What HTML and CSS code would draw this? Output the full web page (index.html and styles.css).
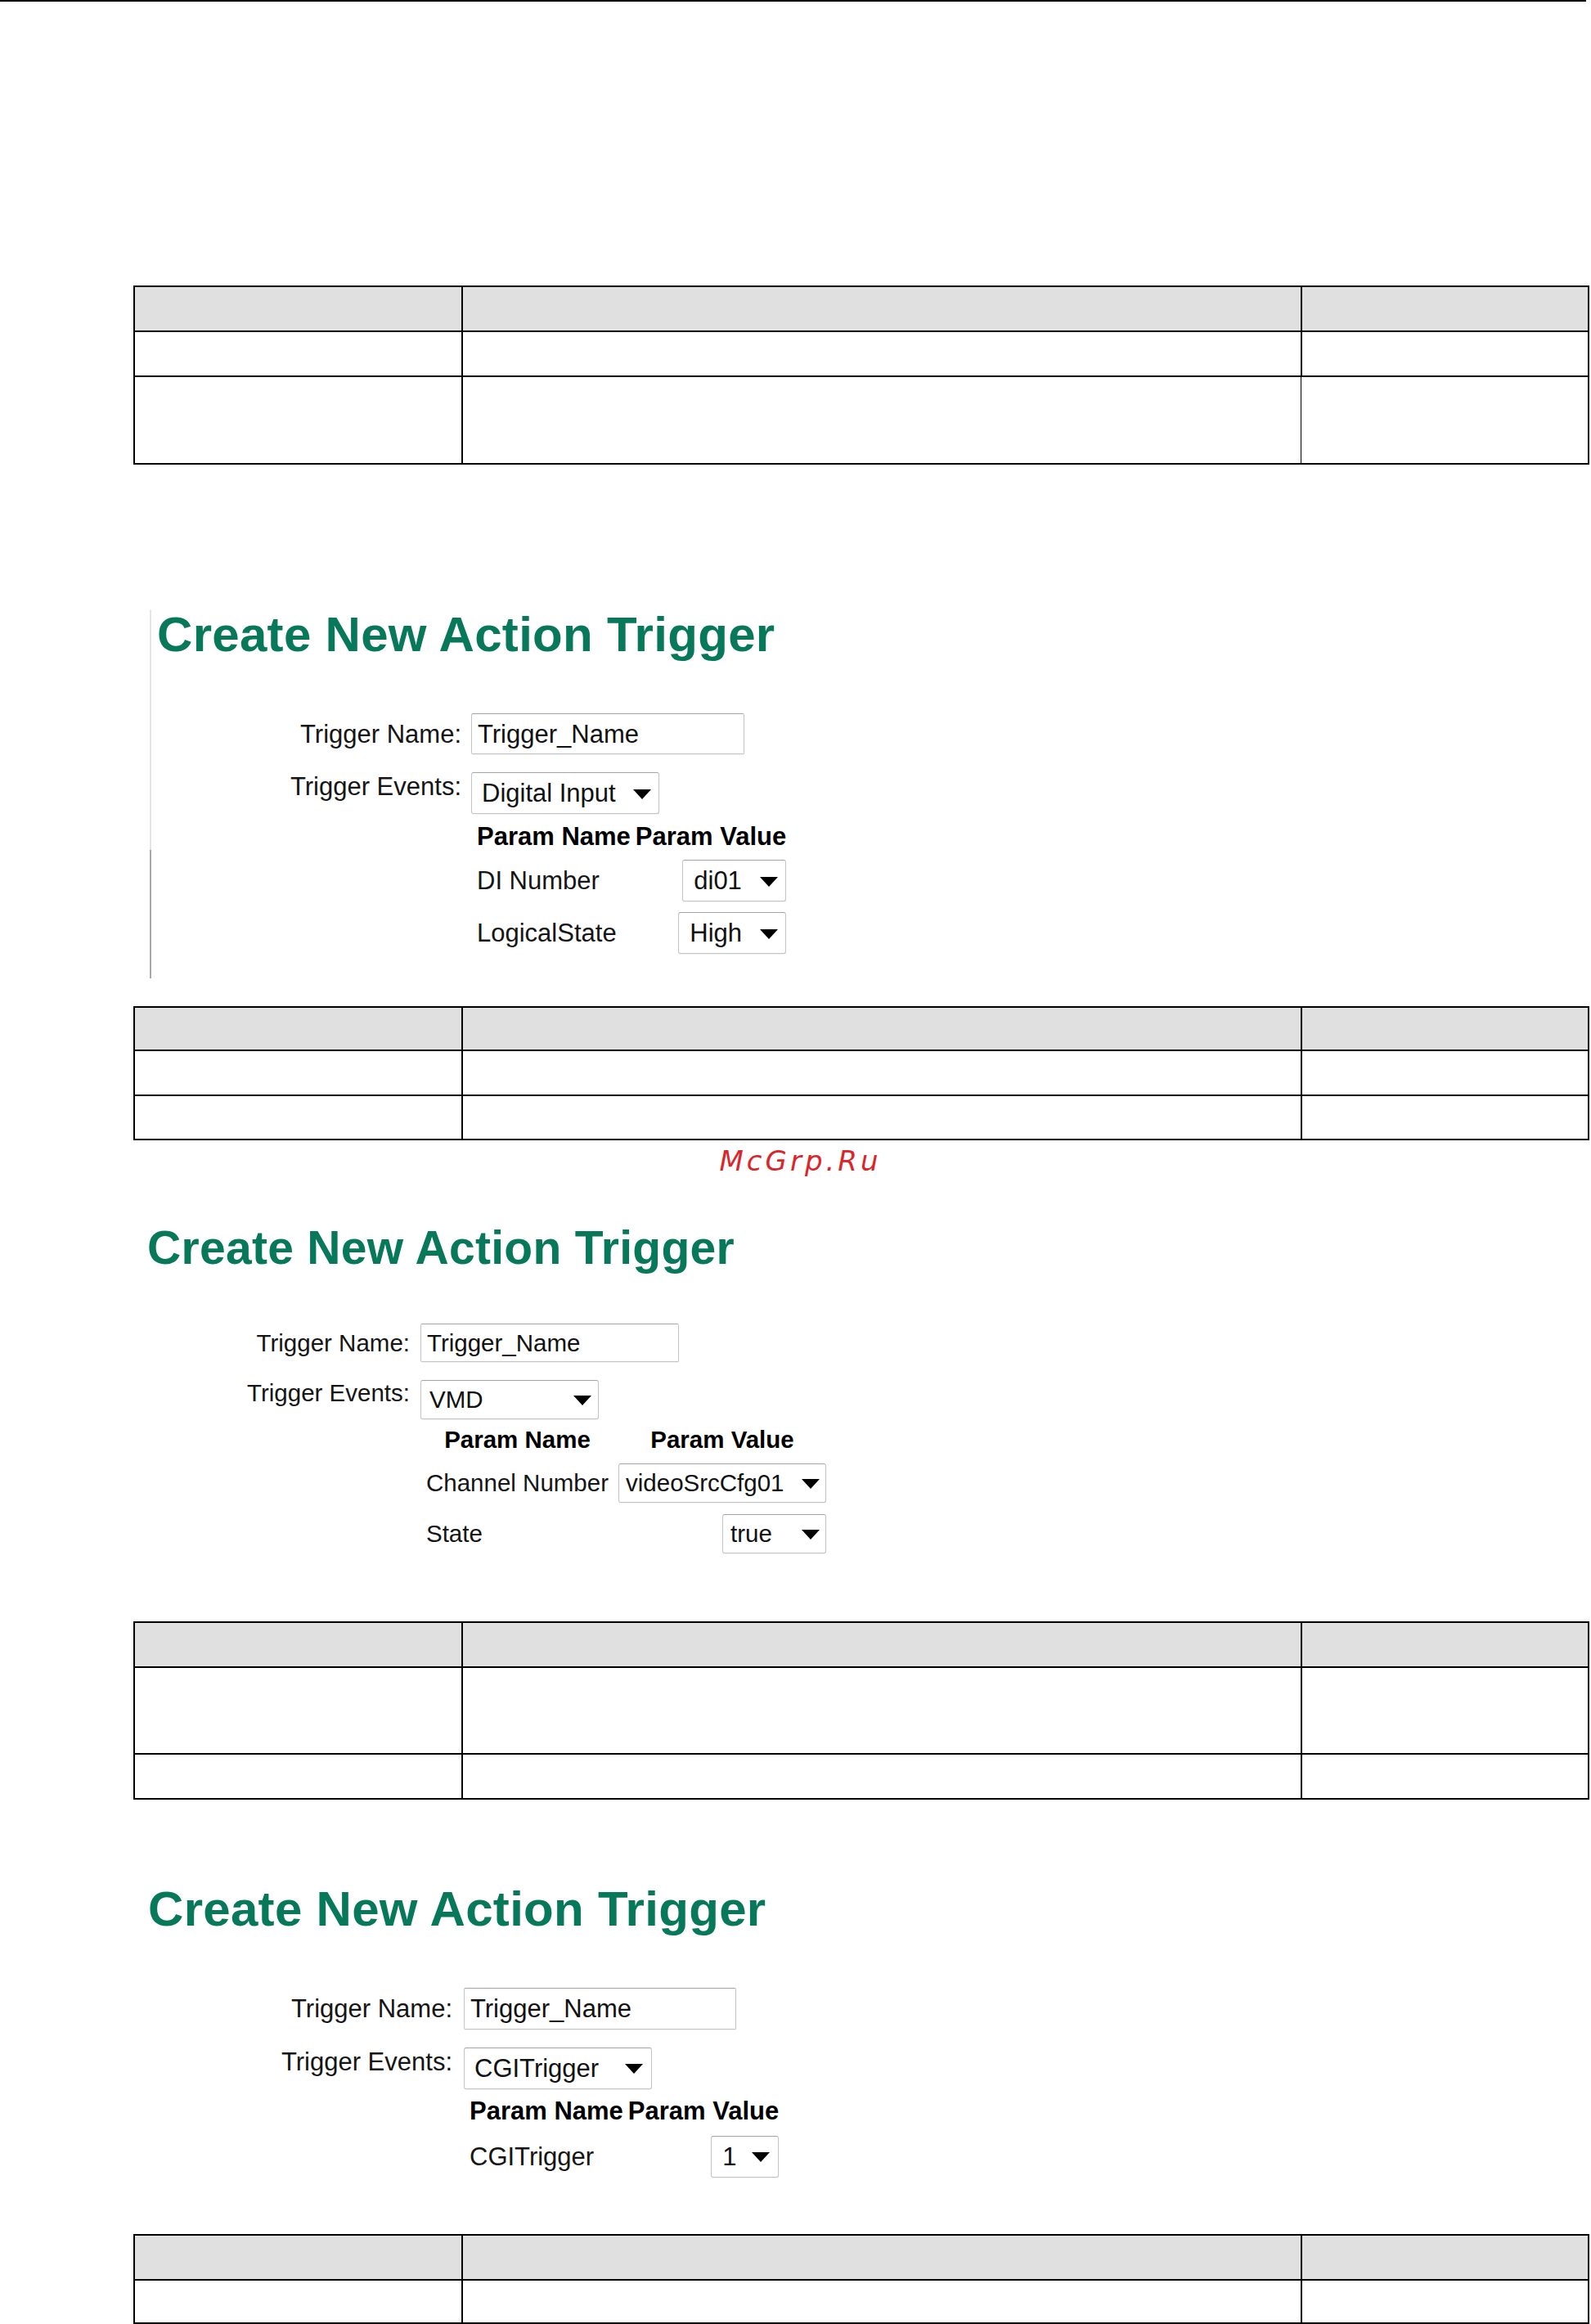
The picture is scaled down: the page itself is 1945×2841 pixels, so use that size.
FILE: index.html
```html
<!DOCTYPE html>
<html lang="en">
<head>
<meta charset="utf-8">
<title>Create New Action Trigger</title>
<link rel="stylesheet" href="styles.css">
</head>
<body>
<div class="page">
  <div class="top-rule"></div>

  <div class="spec spec-1">
    <div class="srow h53 head"><div class="cell"></div><div class="cell"></div><div class="cell"></div></div>
    <div class="srow h53"><div class="cell"></div><div class="cell"></div><div class="cell"></div></div>
    <div class="srow h105"><div class="cell"></div><div class="cell"></div><div class="cell thin"></div></div>
  </div>

  <section class="shot shot-1">
    <h2 class="title">Create New Action Trigger</h2>
    <div class="form">
      <div class="frow">
        <span class="lbl">Trigger Name:</span>
        <div class="input">Trigger_Name</div>
      </div>
      <div class="frow frow-events">
        <span class="lbl">Trigger Events:</span>
        <div class="select sel-event"><span>Digital Input</span><i class="arrow"></i></div>
      </div>
      <div class="params">
        <b class="ph">Param Name</b><b class="ph">Param Value</b>
        <span class="pn">DI Number</span>
        <div class="pv"><div class="select sel-di"><span>di01</span><i class="arrow"></i></div></div>
        <span class="pn">LogicalState</span>
        <div class="pv"><div class="select sel-high"><span>High</span><i class="arrow"></i></div></div>
      </div>
    </div>
  </section>

  <div class="spec spec-2">
    <div class="srow h51 head"><div class="cell"></div><div class="cell"></div><div class="cell"></div></div>
    <div class="srow h53"><div class="cell"></div><div class="cell"></div><div class="cell"></div></div>
    <div class="srow h52"><div class="cell"></div><div class="cell"></div><div class="cell"></div></div>
  </div>

  <div class="watermark">McGrp.Ru</div>

  <section class="shot shot-2">
    <h2 class="title">Create New Action Trigger</h2>
    <div class="form">
      <div class="frow">
        <span class="lbl">Trigger Name:</span>
        <div class="input">Trigger_Name</div>
      </div>
      <div class="frow frow-events">
        <span class="lbl">Trigger Events:</span>
        <div class="select sel-vmd"><span>VMD</span><i class="arrow"></i></div>
      </div>
      <div class="params">
        <b class="ph">Param Name</b><b class="ph">Param Value</b>
        <span class="pn">Channel Number</span>
        <div class="pv"><div class="select sel-chan"><span>videoSrcCfg01</span><i class="arrow"></i></div></div>
        <span class="pn">State</span>
        <div class="pv"><div class="select sel-true"><span>true</span><i class="arrow"></i></div></div>
      </div>
    </div>
  </section>

  <div class="spec spec-3">
    <div class="srow h53 head"><div class="cell"></div><div class="cell"></div><div class="cell"></div></div>
    <div class="srow h104"><div class="cell"></div><div class="cell"></div><div class="cell"></div></div>
    <div class="srow h53"><div class="cell"></div><div class="cell"></div><div class="cell"></div></div>
  </div>

  <section class="shot shot-3">
    <h2 class="title">Create New Action Trigger</h2>
    <div class="form">
      <div class="frow">
        <span class="lbl">Trigger Name:</span>
        <div class="input">Trigger_Name</div>
      </div>
      <div class="frow frow-events">
        <span class="lbl">Trigger Events:</span>
        <div class="select sel-cgi"><span>CGITrigger</span><i class="arrow"></i></div>
      </div>
      <div class="params">
        <b class="ph">Param Name</b><b class="ph">Param Value</b>
        <span class="pn">CGITrigger</span>
        <div class="pv"><div class="select sel-one"><span>1</span><i class="arrow"></i></div></div>
      </div>
    </div>
  </section>

  <div class="spec spec-4">
    <div class="srow h53 head"><div class="cell"></div><div class="cell"></div><div class="cell"></div></div>
    <div class="srow h51"><div class="cell"></div><div class="cell"></div><div class="cell"></div></div>
  </div>
</div>
</body>
</html>
```
FILE: styles.css
```css
* { box-sizing: border-box; }

html, body {
  margin: 0;
  padding: 0;
  background: #ffffff;
}

body {
  font-family: "Liberation Sans", Arial, sans-serif;
  color: #111111;
}

.page {
  width: 1945px;
  display: flex;
  flex-direction: column;
  align-items: flex-start;
}

.top-rule {
  width: 1939px;
  height: 2px;
  background: #000000;
}

/* ---------- spec tables ---------- */
.spec {
  margin-left: 163px;
  width: 1780px;
  border: 2px solid #000000;
  display: flex;
  flex-direction: column;
}

.srow {
  box-sizing: content-box;
  display: grid;
  grid-template-columns: 399px 1026px 351px;
}
.srow + .srow { border-top: 2px solid #000000; }

.srow.head { background: #e0e0e0; }

.cell + .cell { border-left: 2px solid #000000; }
.cell.thin { border-left-width: 1px; }

.h51 { height: 51px; }
.h52 { height: 52px; }
.h53 { height: 53px; }
.h104 { height: 104px; }
.h105 { height: 105px; }

.spec-1 { margin-top: 347px; }
.spec-2 { margin-top: 34px; }
.spec-3 { margin-top: 83px; }
.spec-4 { margin-top: 69px; }

/* ---------- watermark ---------- */
.watermark {
  align-self: stretch;
  margin-top: 9px;
  padding-left: 12px;
  text-align: center;
  font-family: "DejaVu Sans", sans-serif;
  font-style: oblique;
  font-size: 34px;
  line-height: 33px;
  letter-spacing: 4px;
  color: #d9262a;
}

/* ---------- screenshots ---------- */
.shot {
  --fs: 31px;
  --lw: 224px;
  --cg: 12px;
  --ctl-h: 51px;
  --title: 60px;
  display: flex;
  flex-direction: column;
  align-items: flex-start;
  font-size: var(--fs);
  line-height: var(--fs);
}

.title {
  margin: 0;
  font-size: var(--title);
  line-height: var(--title);
  font-weight: bold;
  letter-spacing: 0.3px;
  color: #08785b;
  white-space: nowrap;
}

.form {
  display: flex;
  flex-direction: column;
  align-items: flex-start;
}

.frow {
  display: flex;
  align-items: center;
  column-gap: var(--cg);
}

.frow-events {
  align-items: flex-start;
  margin-top: 22px;
}
.frow-events .lbl { padding-top: 2px; }

.lbl {
  flex: none;
  width: var(--lw);
  text-align: right;
  white-space: nowrap;
  color: #151515;
}

.input {
  height: var(--in-h, 50px);
  width: var(--in-w, 334px);
  display: flex;
  align-items: center;
  padding-left: 7px;
  border: 1px solid #c4c4c4;
  border-top-color: #a4a4a4;
  border-radius: 2px;
  background: #ffffff;
  box-shadow: 0 1px 1px rgba(0, 0, 0, 0.06);
  white-space: nowrap;
}

.select {
  height: var(--ctl-h);
  display: flex;
  align-items: center;
  justify-content: space-between;
  padding: 0 var(--sel-pr, 9px) 0 var(--sel-pl, 12px);
  border: 1px solid #c4c4c4;
  border-top-color: #a4a4a4;
  border-radius: 3px;
  background: #ffffff;
  box-shadow: 0 1px 1px rgba(0, 0, 0, 0.06);
  white-space: nowrap;
}

.arrow {
  flex: none;
  width: 0;
  height: 0;
  border-left: 11px solid transparent;
  border-right: 11px solid transparent;
  border-top: 12px solid #000000;
  margin-top: 2px;
}

.params {
  display: grid;
  grid-template-columns: auto auto;
  column-gap: var(--pg, 6px);
  row-gap: var(--prg, 13px);
  align-items: center;
  margin-top: var(--pm, 12px);
  margin-left: calc(var(--lw) + var(--cg) + 7px);
}

.ph {
  text-align: center;
  font-weight: bold;
  white-space: nowrap;
  color: #000000;
}

.pn {
  white-space: nowrap;
  color: #151515;
}

.pv {
  display: flex;
  justify-content: flex-end;
}

/* ---------- screenshot 1 ---------- */
.shot-1 {
  margin-top: 178px;
  margin-left: 183px;
  padding: 0 0 30px 7px;
  border-left: 2px solid #dcdcdc;
  border-image: linear-gradient(to bottom, #e4e4e4 0%, #e4e4e4 65%, #a8a8a8 65%, #a8a8a8 100%) 1;
}
.sel-event { width: 230px; }
.sel-di { width: 127px; --sel-pl: 13px; }
.sel-high { width: 132px; --sel-pl: 13px; }
.shot-1 .form { margin-top: 66px; margin-left: 148px; }

/* ---------- screenshot 2 ---------- */
.shot-2 {
  --fs: 29.5px;
  --lw: 221px;
  --cg: 13px;
  --ctl-h: 48px;
  --title: 57px;
  --in-h: 47px;
  --in-w: 316px;
  --pg: 12px;
  --pm: 10px;
  --prg: 14px;
  margin-top: 61px;
  margin-left: 180px;
}
.shot-2 .form { margin-top: 64px; margin-left: 100px; }
.shot-2 .frow-events .lbl { padding-top: 1px; }
.sel-vmd { width: 218px; --sel-pl: 10px; --sel-pr: 8px; }
.sel-chan { width: 254px; --sel-pl: 8px; --sel-pr: 7px; }
.sel-true { width: 127px; --sel-pl: 9px; --sel-pr: 7px; }

/* ---------- screenshot 3 ---------- */
.shot-3 {
  --lw: 222px;
  --cg: 14px;
  --in-h: 51px;
  --in-w: 333px;
  --pm: 11px;
  --prg: 15px;
  margin-top: 104px;
  margin-left: 181px;
}
.shot-3 .form { margin-top: 66px; margin-left: 150px; }
.sel-cgi { width: 230px; --sel-pr: 10px; }
.sel-one { width: 83px; --sel-pl: 13px; --sel-pr: 10px; }
```
